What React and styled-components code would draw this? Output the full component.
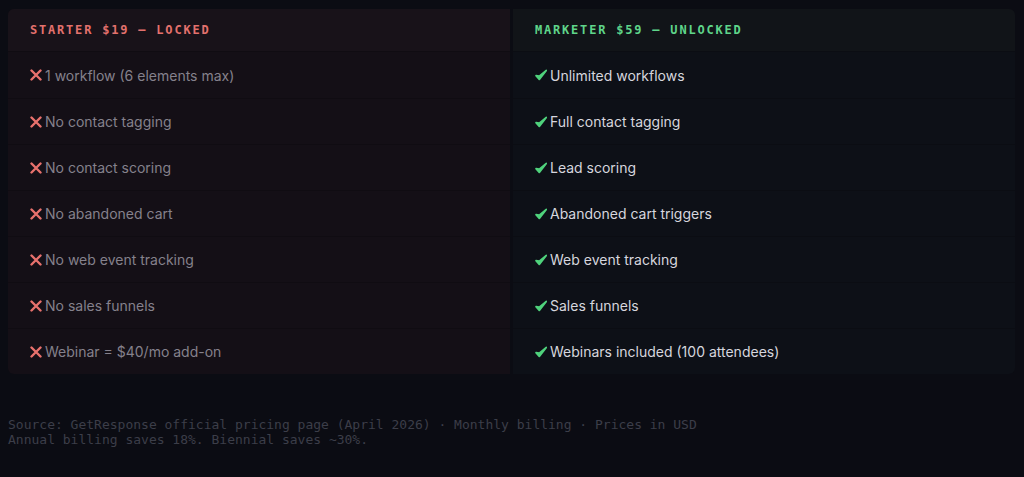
import React from "react";
import styled, { createGlobalStyle } from "styled-components";

const starter = [
  "1 workflow (6 elements max)",
  "No contact tagging",
  "No contact scoring",
  "No abandoned cart",
  "No web event tracking",
  "No sales funnels",
  "Webinar = $40/mo add-on",
];

const marketer = [
  "Unlimited workflows",
  "Full contact tagging",
  "Lead scoring",
  "Abandoned cart triggers",
  "Web event tracking",
  "Sales funnels",
  "Webinars included (100 attendees)",
];

const GlobalStyle = createGlobalStyle`
  html, body {
    margin: 0;
    background: #0b0c13;
  }
`;

const Page = styled.div`
  padding: 9px 9px 0 8px;
  font-family: Inter, "Open Sans", sans-serif;
`;

const Table = styled.div`
  display: grid;
  grid-template-columns: 1fr 1fr;
  column-gap: 3px;
  border-radius: 6px;
  overflow: hidden;
`;

const Column = styled.div`
  display: flex;
  flex-direction: column;
  background: ${(p) => (p.$locked ? "#140f16" : "#0d1017")};
`;

const Head = styled.div`
  height: 42px;
  display: flex;
  align-items: center;
  padding-left: 22px;
  background: ${(p) => (p.$locked ? "#181219" : "#111418")};
  color: ${(p) => (p.$locked ? "#e3716d" : "#5fd58a")};
  font-family: "DejaVu Sans Mono", monospace;
  font-weight: 700;
  font-size: 12px;
  letter-spacing: 1.8px;
  border-bottom: 1px solid ${(p) => (p.$locked ? "#100c12" : "#0b0d13")};
`;

const Row = styled.div`
  height: 46px;
  box-sizing: border-box;
  display: flex;
  align-items: center;
  gap: 3px;
  padding-left: 22px;
  font-size: 14px;
  color: ${(p) => (p.$locked ? "#85818c" : "#d6d6de")};
  border-top: 1px solid ${(p) => (p.$locked ? "#100c12" : "#0b0d13")};
  &:first-of-type {
    border-top: none;
  }
`;

const Mark = styled.svg`
  width: 12px;
  height: 12px;
  flex: none;
  color: ${(p) => (p.$locked ? "#e8716d" : "#4fd27c")};
`;

const Footer = styled.div`
  margin-top: 43px;
  font-family: "DejaVu Sans Mono", monospace;
  font-size: 13px;
  line-height: 15px;
  color: #3c3e49;
`;

const Cross = () => (
  <Mark $locked viewBox="0 0 12 12">
    <path
      d="M1.5 1.5 L10.5 10.5 M10.5 1.5 L1.5 10.5"
      stroke="currentColor"
      strokeWidth="2.4"
      strokeLinecap="round"
      fill="none"
    />
  </Mark>
);

const Check = () => (
  <Mark viewBox="0 0 12 12">
    <path
      d="M1 6.6 L4.3 10.4 L11.3 1.4 L4.3 7.2 Z"
      fill="currentColor"
      stroke="currentColor"
      strokeWidth="1.7"
      strokeLinejoin="round"
    />
  </Mark>
);

const Plan = ({ locked, title, items }) => (
  <Column $locked={locked}>
    <Head $locked={locked}>{title}</Head>
    <div>
      {items.map((item) => (
        <Row key={item} $locked={locked}>
          {locked ? <Cross /> : <Check />}
          {item}
        </Row>
      ))}
    </div>
  </Column>
);

export default function App() {
  return (
    <Page>
      <GlobalStyle />
      <Table>
        <Plan locked title="STARTER $19 — LOCKED" items={starter} />
        <Plan title="MARKETER $59 — UNLOCKED" items={marketer} />
      </Table>
      <Footer>
        <div>
          Source: GetResponse official pricing page (April 2026) · Monthly
          billing · Prices in USD
        </div>
        <div>Annual billing saves 18%. Biennial saves ~30%.</div>
      </Footer>
    </Page>
  );
}
